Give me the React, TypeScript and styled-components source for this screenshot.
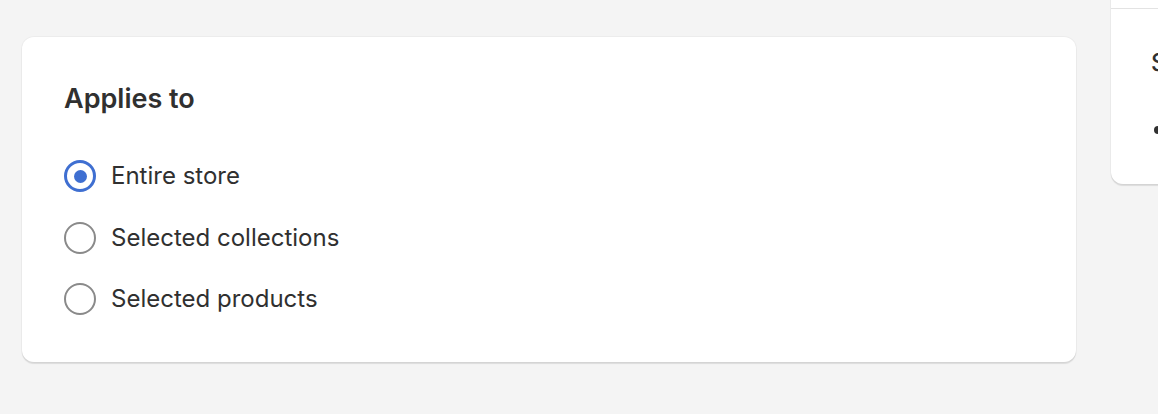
import React, { useState } from 'react';
import styled, { createGlobalStyle } from 'styled-components';

const GlobalStyle = createGlobalStyle`
  html, body {
    margin: 0;
    padding: 0;
    background: #f4f4f4;
    font-family: Inter, "Noto Sans", "Liberation Sans", sans-serif;
    color: #303030;
    -webkit-font-smoothing: antialiased;
  }
`;

const Page = styled.div`
  display: flex;
  align-items: flex-start;
  gap: 35px;
  width: 1158px;
  height: 414px;
  padding: 37px 0 0 22px;
  box-sizing: border-box;
  overflow: hidden;
`;

const Card = styled.section`
  flex: 0 0 1054px;
  box-sizing: border-box;
  height: 325px;
  background: #ffffff;
  border-radius: 12px;
  box-shadow: 0 2px 1px rgba(0, 0, 0, 0.1), 0 0 0 1px rgba(0, 0, 0, 0.03);
  padding: 46px 42px;
`;

const Title = styled.h2`
  margin: 0 0 45px;
  font-size: 27px;
  font-weight: 600;
  line-height: 32px;
  color: #303030;
`;

const RadioList = styled.div`
  display: flex;
  flex-direction: column;
  gap: 29.5px;
`;

const Option = styled.label`
  display: flex;
  align-items: center;
  gap: 15px;
  cursor: pointer;
  font-size: 24px;
  line-height: 32px;
  color: #303030;
`;

const HiddenInput = styled.input`
  position: absolute;
  opacity: 0;
  width: 0;
  height: 0;
`;

const RadioCircle = styled.span<{ $checked: boolean }>`
  display: flex;
  align-items: center;
  justify-content: center;
  width: 32px;
  height: 32px;
  box-sizing: border-box;
  border-radius: 50%;
  border: ${(p) => (p.$checked ? '3px solid #3f6fd1' : '2.5px solid #8a8a8a')};
  background: #fff;

  &::after {
    content: '';
    width: 13px;
    height: 13px;
    border-radius: 50%;
    background: #3f6fd1;
    display: ${(p) => (p.$checked ? 'block' : 'none')};
  }
`;

const SideCard = styled.aside`
  flex: 0 0 300px;
  margin-top: -77px;
  background: #ffffff;
  border-radius: 12px;
  box-shadow: 0 2px 1px rgba(0, 0, 0, 0.1), 0 0 0 1px rgba(0, 0, 0, 0.03);
  overflow: hidden;
`;

const SideTop = styled.div`
  height: 48px;
  border-bottom: 1px solid #e3e3e3;
`;

const SideBody = styled.div`
  padding: 40px 0 41px 40px;
  font-size: 24px;
  line-height: 28px;
  color: #303030;
`;

const SideHeading = styled.div`
  font-weight: 500;
  margin-bottom: 38px;
`;

const SideList = styled.ul`
  margin: 0;
  padding: 0 0 0 25px;
  white-space: nowrap;
`;

const options = ['Entire store', 'Selected collections', 'Selected products'];

export default function App() {
  const [value, setValue] = useState(options[0]);

  return (
    <>
      <GlobalStyle />
      <Page>
        <Card>
          <Title>Applies to</Title>
          <RadioList>
            {options.map((opt) => (
              <Option key={opt}>
                <HiddenInput
                  type="radio"
                  name="applies"
                  checked={value === opt}
                  onChange={() => setValue(opt)}
                />
                <RadioCircle $checked={value === opt} />
                {opt}
              </Option>
            ))}
          </RadioList>
        </Card>
        <SideCard>
          <SideTop />
          <SideBody>
            <SideHeading>Summary</SideHeading>
            <SideList>
              <li>For all products</li>
            </SideList>
          </SideBody>
        </SideCard>
      </Page>
    </>
  );
}
